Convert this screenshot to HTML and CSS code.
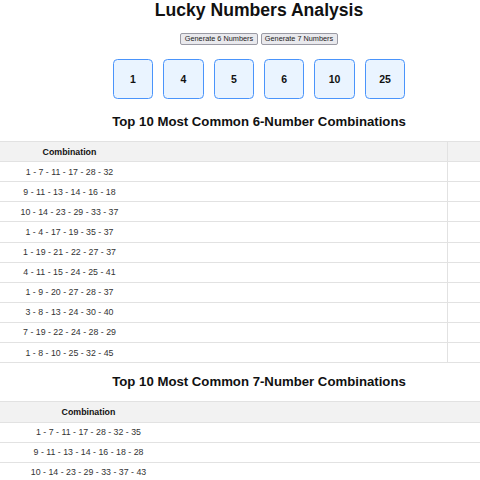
FILE: index.html
```html
<!DOCTYPE html>
<html>
<head>
  <title>Lucky Numbers Analysis</title>
  <meta name="viewport" content="width=device-width, initial-scale=1">
  <link rel="stylesheet" href="styles.css">
</head>
<body>
  <div class="page">
    <h1>Lucky Numbers Analysis</h1>
    <div class="actions">
      <button onclick="generate(6)">Generate 6 Numbers</button>
      <button onclick="generate(7)">Generate 7 Numbers</button>
    </div>
    <div class="numbers" id="numbers">
      <div class="ball">1</div>
      <div class="ball">4</div>
      <div class="ball">5</div>
      <div class="ball">6</div>
      <div class="ball">10</div>
      <div class="ball">25</div>
    </div>

    <h2>Top 10 Most Common 6-Number Combinations</h2>
    <table class="combos combos-6">
      <colgroup><col class="col-combo"><col class="col-freq"></colgroup>
      <thead>
        <tr><th>Combination</th><th>Frequency</th></tr>
      </thead>
      <tbody>
        <tr><td>1 - 7 - 11 - 17 - 28 - 32</td><td>4</td></tr>
        <tr><td>9 - 11 - 13 - 14 - 16 - 18</td><td>3</td></tr>
        <tr><td>10 - 14 - 23 - 29 - 33 - 37</td><td>3</td></tr>
        <tr><td>1 - 4 - 17 - 19 - 35 - 37</td><td>2</td></tr>
        <tr><td>1 - 19 - 21 - 22 - 27 - 37</td><td>2</td></tr>
        <tr><td>4 - 11 - 15 - 24 - 25 - 41</td><td>2</td></tr>
        <tr><td>1 - 9 - 20 - 27 - 28 - 37</td><td>2</td></tr>
        <tr><td>3 - 8 - 13 - 24 - 30 - 40</td><td>2</td></tr>
        <tr><td>7 - 19 - 22 - 24 - 28 - 29</td><td>2</td></tr>
        <tr><td>1 - 8 - 10 - 25 - 32 - 45</td><td>2</td></tr>
      </tbody>
    </table>

    <h2>Top 10 Most Common 7-Number Combinations</h2>
    <table class="combos combos-7">
      <colgroup><col class="col-combo"><col class="col-freq"></colgroup>
      <thead>
        <tr><th>Combination</th><th>Frequency</th></tr>
      </thead>
      <tbody>
        <tr><td>1 - 7 - 11 - 17 - 28 - 32 - 35</td><td>3</td></tr>
        <tr><td>9 - 11 - 13 - 14 - 16 - 18 - 28</td><td>3</td></tr>
        <tr><td>10 - 14 - 23 - 29 - 33 - 37 - 43</td><td>2</td></tr>
        <tr><td>1 - 4 - 17 - 19 - 35 - 37 - 42</td><td>2</td></tr>
        <tr><td>1 - 19 - 21 - 22 - 27 - 37 - 44</td><td>2</td></tr>
        <tr><td>4 - 11 - 15 - 24 - 25 - 41 - 45</td><td>2</td></tr>
        <tr><td>1 - 9 - 20 - 27 - 28 - 37 - 39</td><td>2</td></tr>
        <tr><td>3 - 8 - 13 - 24 - 30 - 40 - 44</td><td>2</td></tr>
        <tr><td>7 - 19 - 22 - 24 - 28 - 29 - 36</td><td>2</td></tr>
        <tr><td>1 - 8 - 10 - 25 - 32 - 45 - 47</td><td>2</td></tr>
      </tbody>
    </table>
  </div>
  <script>
    // pick `count` unique numbers from 1..49, sorted
    function generate(count) {
      const picked = [];
      while (picked.length < count) {
        const n = Math.floor(Math.random() * 49) + 1;
        if (!picked.includes(n)) picked.push(n);
      }
      picked.sort((a, b) => a - b);
      const box = document.getElementById('numbers');
      box.innerHTML = '';
      picked.forEach(n => {
        const ball = document.createElement('div');
        ball.className = 'ball';
        ball.innerText = n;
        box.appendChild(ball);
      });
    }
  </script>
</body>
</html>
```

FILE: styles.css
```css
html, body {
  margin: 0;
  padding: 0;
  background: #fff;
}
body {
  font-family: "Liberation Sans", Arial, sans-serif;
  color: #111;
}
.page {
  box-sizing: border-box;
  width: 100%;
  padding-left: 38px;
  overflow: hidden;
  display: flex;
  flex-direction: column;
  align-items: center;
}
h1 {
  font-size: 17.6px;
  margin: 0 0 11.8px;
  line-height: normal;
}
.actions {
  display: flex;
  gap: 3px;
}
.actions button {
  font-family: "Liberation Sans", Arial, sans-serif;
  font-size: 7.33px;
  line-height: normal;
  color: #222;
  background: #e9e9ed;
  border: 1px solid #9a9aa4;
  border-radius: 2px;
  padding: 0.6px 3.3px;
  cursor: pointer;
}
.numbers {
  display: flex;
  gap: 10px;
  margin: 14px 0 3.3px;
}
.ball {
  box-sizing: border-box;
  width: 40.4px;
  height: 40.4px;
  display: flex;
  align-items: center;
  justify-content: center;
  background: #eaf4ff;
  border: 1.5px solid #4a94fb;
  border-radius: 4.5px;
  font-size: 10.5px;
  font-weight: bold;
}
h2 {
  font-size: 13.2px;
  line-height: normal;
  margin: 11px 0 12.4px;
}
.combos {
  flex: none;
  width: 1136px;
  table-layout: fixed;
  border-collapse: collapse;
  font-size: 8.8px;
  color: #333;
}
.combos-6 .col-combo { width: 756px; }
.combos-7 .col-combo { width: 794px; }
.combos th,
.combos td {
  border: 1px solid #e2e2e2;
  padding: 4.55px;
  text-align: center;
  line-height: normal;
}
.combos th {
  background: #f2f2f2;
  color: #111;
  font-weight: bold;
}
```
